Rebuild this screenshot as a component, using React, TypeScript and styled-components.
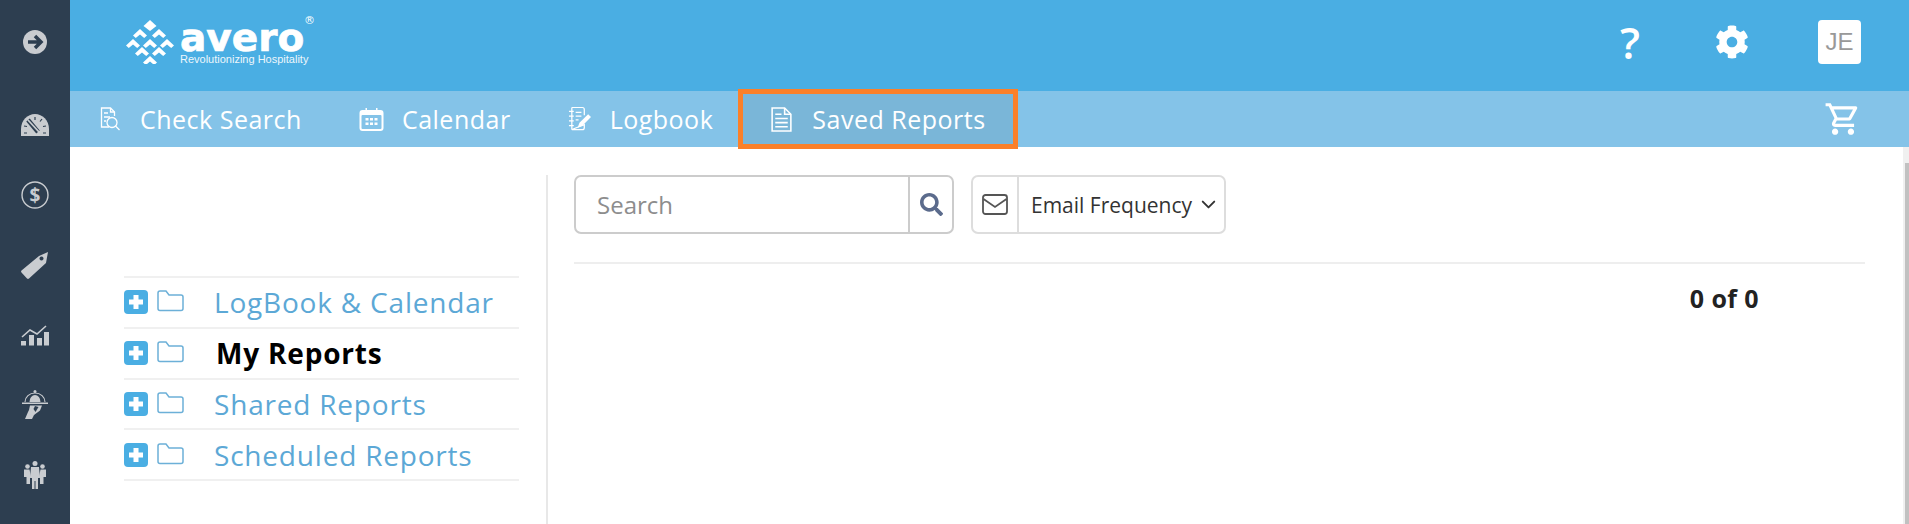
import React from "react"
import styled, { createGlobalStyle } from "styled-components"
import { FaCog, FaSearch } from "react-icons/fa"
import { FiChevronDown } from "react-icons/fi"
import { MdOutlineShoppingCart } from "react-icons/md"

const GlobalStyle = createGlobalStyle`
  html, body {
    margin: 0;
    padding: 0;
    height: 100%;
    overflow: hidden;
    background: #fff;
    font-family: "Open Sans", "Liberation Sans", sans-serif;
  }
  #root { height: 100%; }
`

const markChevrons = [
  [14, 13], [33, 13],
  [7, 23], [24, 23], [41, 23],
  [16, 31], [33, 31],
  [24, 40],
]

const LogoMark = () => (
  <svg width="48" height="44" viewBox="0 0 48 44" fill="#fff">
    <path d="M24 0l6.500 6-6.500 5-6.500-5z" />
    {markChevrons.map(([x, y]) => (
      <path key={`${x}-${y}`} d="M-7 2.500L0-4l7 6.500L4.200 5 0 1.500-4.200 5z" transform={`translate(${x} ${y})`} />
    ))}
  </svg>
)

const GaugeIcon = () => (
  <svg width="28" height="22" viewBox="0 0 28 22">
    <path d="M0 22v-7C0 6.500 6.500 0 14 0s14 6.500 14 15v7z" fill="#c9ccd0" />
    <path d="M7 6l10 12" stroke="#2d3e50" strokeWidth="4.500" />
    <path d="M7 6l11 12" stroke="#c9ccd0" strokeWidth="1.800" />
    <path d="M14 3v3M21 5l-2 2.500M25 12l-3 .5M3 12l3 .5M25 19h-3M3 19h3" stroke="#2d3e50" strokeWidth="1.200" />
  </svg>
)

const DollarIcon = () => (
  <svg width="28" height="28" viewBox="0 0 28 28">
    <circle cx="14" cy="14" r="13" fill="none" stroke="#c9ccd0" strokeWidth="1.400" />
    <text x="14" y="20.500" textAnchor="middle" fontSize="19" fontWeight="700" fontFamily="Open Sans" fill="#c9ccd0">$</text>
  </svg>
)

const TagIcon = () => (
  <svg width="28" height="27" viewBox="0 0 28 27">
    <path
      fillRule="evenodd"
      fill="#c9ccd0"
      d="M18 4L27 0l-2 11L8 26.500a1.500 1.500 0 0 1-2 0L.5 20.500a1.500 1.500 0 0 1 0-2zM20.500 4.500a2 2 0 1 0 .01 0z"
    />
  </svg>
)

const ChartIcon = () => (
  <svg width="28" height="22" viewBox="0 0 28 22" fill="#c9ccd0">
    <rect x="0" y="17" width="5" height="4.500" />
    <rect x="8" y="11" width="5" height="10.500" />
    <rect x="16" y="14" width="5" height="7.500" />
    <rect x="23" y="8" width="5" height="13.500" />
    <path d="M1 13l8-7 7 4 9-8" fill="none" stroke="#c9ccd0" strokeWidth="1.600" />
  </svg>
)

const ServiceIcon = () => (
  <svg width="26" height="30" viewBox="0 0 26 30" fill="#c9ccd0">
    <circle cx="13" cy="1.500" r="1.500" />
    <path d="M3 12a10 9 0 0 1 20 0" fill="none" stroke="#c9ccd0" strokeWidth="1.100" />
    <path d="M7.500 12a5.500 7 0 0 1 11 0z" />
    <rect x="0" y="12.500" width="26" height="1.500" />
    <path d="M8 15.500h12l-2 5-6 4.500-2 4H3l3-7 1-2z" />
    <path d="M13 16l3.500 1-3 5-2-3z" fill="#2d3e50" />
  </svg>
)

const TeamIcon = () => (
  <svg width="22" height="28" viewBox="0 0 22 28" fill="#c9ccd0">
    <circle cx="11" cy="2.500" r="2.500" />
    <circle cx="3.500" cy="5.500" r="2.300" />
    <circle cx="18.500" cy="5.500" r="2.300" />
    <path d="M0 8.500h5.500L7 16H6v7H2.500v-7H0z" />
    <path d="M16.500 8.500H22V16h-2.500v7H16v-7h-1z" />
    <path d="M7 6h8l1 11h-2v11h-2.500V20h-1v8H8V17H6z" />
  </svg>
)

const CheckSearchIcon = () => (
  <svg width="20" height="24" viewBox="0 0 20 24" fill="none" stroke="#fff" strokeWidth="1.300">
    <path d="M9 20H1.500V1h9l4 4v4" />
    <path d="M10.500 1v4h4M4 6h4M4 10h6M4 14h2" />
    <circle cx="12" cy="15.500" r="5" />
    <path d="M15.500 19l4 4" />
  </svg>
)

const CalendarIcon = () => (
  <svg width="25" height="24" viewBox="0 0 24 24" fill="#fff">
    <path d="M3 3h3V1h1.500v2h9V1H18v2h3a3 3 0 0 1 3 3v15a3 3 0 0 1-3 3H3a3 3 0 0 1-3-3V6a3 3 0 0 1 3-3z" />
    <rect x="2" y="8" width="20" height="14" rx="1" fill="#84c3e8" />
    <path d="M6 11h3v2.500H6zM10.500 11h3v2.500h-3zM15 11h3v2.500h-3zM6 15.500h3V18H6zM10.500 15.500h3V18h-3zM15 15.500h3V18h-3z" />
  </svg>
)

const LogbookIcon = () => (
  <svg width="23" height="26" viewBox="0 0 24 26" fill="none" stroke="#fff" strokeWidth="1.300">
    <path d="M4 1h11a2 2 0 0 1 2 2v6M17 19v3a2 2 0 0 1-2 2H4z" />
    <path d="M4 1v23M1 5h5M1 10h5M1 15h5M1 20h5M8 6h6M8 10h6M8 14h3" />
    <path d="M10 22l2-5 9-9 3 3-9 9z" fill="#fff" stroke="none" />
  </svg>
)

const SavedIcon = () => (
  <svg width="21" height="25" viewBox="0 0 20 24" fill="none" stroke="#fff" strokeWidth="1.500">
    <path d="M1 1h12l6 6v16H1z" />
    <path d="M13 1v6h6M4 7h6M4 11h12M4 15h12M4 19h12" />
  </svg>
)

const PlusIcon = () => (
  <svg width="24" height="24" viewBox="0 0 24 24">
    <rect width="24" height="24" rx="4" fill="#4aaee3" />
    <path d="M12 5v14M5 12h14" stroke="#fff" strokeWidth="5" />
  </svg>
)

const FolderIcon = () => (
  <FolderSvg width="27" height="22" viewBox="0 0 27 22" fill="none" stroke="#6cb0d8" strokeWidth="1.500">
    <path d="M1 18.500V3a2 2 0 0 1 2-2h6l3 4h12a2 2 0 0 1 2 2v11.500a2 2 0 0 1-2 2H3a2 2 0 0 1-2-2z" />
  </FolderSvg>
)

const EnvelopeIcon = () => (
  <svg width="26" height="21" viewBox="0 0 26 21" fill="none" stroke="#555" strokeWidth="1.800">
    <rect x="1" y="1" width="24" height="19" rx="2.500" />
    <path d="M1.500 5L13 13 24.500 5" />
  </svg>
)

const treeItems = [
  { label: "LogBook & Calendar" },
  { label: "My Reports", active: true },
  { label: "Shared Reports" },
  { label: "Scheduled Reports" },
]

export default function App() {
  return (
    <Page>
      <GlobalStyle />
      <Sidebar>
        <ArrowSlot>
          <svg width="24" height="24" viewBox="0 0 24 24">
            <circle cx="12" cy="12" r="12" fill="#c9ccd0" />
            <path d="M5 12h12M12 6l6 6-6 6" fill="none" stroke="#2d3e50" strokeWidth="3.500" />
          </svg>
        </ArrowSlot>
        <SideSlot><GaugeIcon /></SideSlot>
        <SideSlot><DollarIcon /></SideSlot>
        <SideSlot><TagIcon /></SideSlot>
        <SideSlot><ChartIcon /></SideSlot>
        <SideSlot><ServiceIcon /></SideSlot>
        <SideSlot><TeamIcon /></SideSlot>
      </Sidebar>
      <Content>
        <Header>
          <Logo>
            <LogoMark />
            <LogoWords>
              <LogoName>avero<LogoReg>®</LogoReg></LogoName>
              <LogoTag>Revolutionizing Hospitality</LogoTag>
            </LogoWords>
          </Logo>
          <HeaderTools>
            <Help>?</Help>
            <FaCog size={34} color="#fff" />
            <Avatar>JE</Avatar>
          </HeaderTools>
        </Header>
        <NavBar>
          <NavItem $gap={20}><CheckSearchIcon />Check Search</NavItem>
          <NavItem $gap={18}><CalendarIcon />Calendar</NavItem>
          <NavItem $gap={19}><LogbookIcon />Logbook</NavItem>
          <ActiveNavItem><SavedIcon />Saved Reports</ActiveNavItem>
          <CartSlot><MdOutlineShoppingCart size={38} color="#fff" /></CartSlot>
        </NavBar>
        <Body>
          <TreePanel>
            <Tree>
              {treeItems.map((item) => (
                <TreeRow key={item.label}>
                  <PlusIcon />
                  <FolderIcon />
                  <TreeLabel $active={item.active}>{item.label}</TreeLabel>
                </TreeRow>
              ))}
            </Tree>
          </TreePanel>
          <Results>
            <Toolbar>
              <SearchBox>
                <SearchInput>Search</SearchInput>
                <SearchButton><FaSearch size={23} color="#5b6b8c" /></SearchButton>
              </SearchBox>
              <EmailBox>
                <EmailIcon><EnvelopeIcon /></EmailIcon>
                <EmailSelect>Email Frequency<FiChevronDown size={23} color="#333" /></EmailSelect>
              </EmailBox>
            </Toolbar>
            <Count>0 of 0</Count>
          </Results>
          <Scrollbar><ScrollThumb /></Scrollbar>
        </Body>
      </Content>
    </Page>
  )
}

const Page = styled.div`
  display: flex;
  height: 524px;
  overflow: hidden;
`

const Sidebar = styled.div`
  width: 70px;
  flex: none;
  background-color: #2d3e50;
`

const SideSlot = styled.div`
  height: 70px;
  display: flex;
  align-items: center;
  justify-content: center;
`

const ArrowSlot = styled(SideSlot)`
  height: 83px;
  margin-bottom: 7px;
`

const Content = styled.div`
  flex: 1;
  display: flex;
  flex-direction: column;
  min-width: 0;
`

const Header = styled.div`
  height: 91px;
  flex: none;
  box-sizing: border-box;
  background-color: #4aaee3;
  display: flex;
  align-items: center;
  justify-content: space-between;
  padding: 0 48px 7px 56px;
`

const Logo = styled.div`
  display: flex;
  align-items: center;
  gap: 6px;
`

const LogoWords = styled.div`
  display: flex;
  flex-direction: column;
  color: #fff;
`

const LogoName = styled.div`
  font-family: "DejaVu Sans", sans-serif;
  font-weight: 700;
  font-size: 39px;
  line-height: 40px;
  height: 34px;
  -webkit-text-stroke: 0.7px #fff;
  position: relative;
`

const LogoReg = styled.span`
  position: absolute;
  top: -4px;
  left: 124px;
  font-size: 11px;
  line-height: 14px;
  font-weight: 400;
  -webkit-text-stroke: 0;
`

const LogoTag = styled.div`
  font-family: "Liberation Sans", sans-serif;
  font-size: 11px;
  line-height: 14px;
  opacity: 0.9;
`

const HeaderTools = styled.div`
  display: flex;
  align-items: center;
  gap: 69px;
`

const Help = styled.span`
  color: #fff;
  font-size: 44px;
  line-height: 1;
  font-weight: 600;
  margin-right: 6px;
`

const FolderSvg = styled.svg`
  margin-top: -2px;
`

const Avatar = styled.div`
  width: 43px;
  height: 44px;
  background: #fff;
  border-radius: 4px;
  color: #999;
  font-family: "Liberation Sans", sans-serif;
  font-size: 24px;
  display: flex;
  align-items: center;
  justify-content: center;
`

const NavBar = styled.div`
  height: 56px;
  flex: none;
  background-color: #84c3e8;
  display: flex;
  align-items: stretch;
  padding-left: 30px;
`

const NavItem = styled.div<{ $gap: number }>`
  display: flex;
  align-items: center;
  gap: ${(p) => p.$gap}px;
  color: #fff;
  font-size: 25px;
  letter-spacing: 0.5px;
  padding-right: 57px;
`

const ActiveNavItem = styled.div`
  display: flex;
  align-items: center;
  gap: 20px;
  color: #fff;
  font-size: 25px;
  letter-spacing: 0.5px;
  background-color: #7ab6d8;
  border: 5px solid #fb8029;
  margin: -2px 0 -2px -32px;
  padding: 0 27px 0 28px;
  position: relative;
`

const CartSlot = styled.div`
  margin-left: auto;
  display: flex;
  align-items: center;
  padding-right: 47px;
`

const Body = styled.div`
  flex: 1;
  display: flex;
  min-height: 0;
  background: #fff;
`

const TreePanel = styled.div`
  width: 478px;
  flex: none;
  padding: 101px 27px 0 54px;
  box-sizing: border-box;
  margin-top: 28px;
  border-right: 2px solid #e8e8e8;
`

const Tree = styled.div`
  border-top: 2px solid #f0f0f0;
`

const TreeRow = styled.div`
  display: flex;
  align-items: center;
  height: 50.750px;
  box-sizing: border-box;
  border-bottom: 2px solid #f0f0f0;
  gap: 9px;
`

const TreeLabel = styled.span<{ $active?: boolean }>`
  margin-left: 21px;
  font-size: 28px;
  letter-spacing: 0.8px;
  color: ${(p) => (p.$active ? "#000" : "#5ca8d6")};
  font-weight: ${(p) => (p.$active ? 700 : 400)};
  ${(p) => p.$active && "padding-left: 2px;"}
`

const Results = styled.div`
  flex: 1;
  margin: 28px 38px 0 26px;
  min-width: 0;
`

const Toolbar = styled.div`
  display: flex;
  gap: 17px;
  height: 89px;
  box-sizing: border-box;
  border-bottom: 2px solid #eee;
`

const SearchBox = styled.div`
  width: 380px;
  height: 59px;
  box-sizing: border-box;
  display: flex;
  border: 2px solid #ccc;
  border-radius: 7px;
`

const SearchInput = styled.div`
  flex: 1;
  display: flex;
  align-items: center;
  padding-left: 21px;
  color: #8d8d8d;
  font-size: 24px;
`

const SearchButton = styled.div`
  width: 42px;
  border-left: 2px solid #ccc;
  display: flex;
  align-items: center;
  justify-content: center;
`

const EmailBox = styled.div`
  height: 59px;
  width: 255px;
  box-sizing: border-box;
  display: flex;
  border: 2px solid #ddd;
  border-radius: 7px;
`

const EmailIcon = styled.div`
  width: 44px;
  border-right: 2px solid #ddd;
  display: flex;
  align-items: center;
  justify-content: center;
`

const EmailSelect = styled.div`
  display: flex;
  align-items: center;
  gap: 5px;
  padding-left: 12px;
  color: #333;
  font-size: 21px;
  white-space: nowrap;
`

const Count = styled.div`
  margin-top: 17px;
  text-align: right;
  padding-right: 106px;
  font-size: 25px;
  font-weight: 700;
  letter-spacing: 0.4px;
  color: #222;
`

const Scrollbar = styled.div`
  width: 6px;
  flex: none;
  box-sizing: border-box;
  background: #f0f0f0;
  padding: 16px 0 0 2px;
`

const ScrollThumb = styled.div`
  height: 100%;
  background: #c1c1c1;
`
